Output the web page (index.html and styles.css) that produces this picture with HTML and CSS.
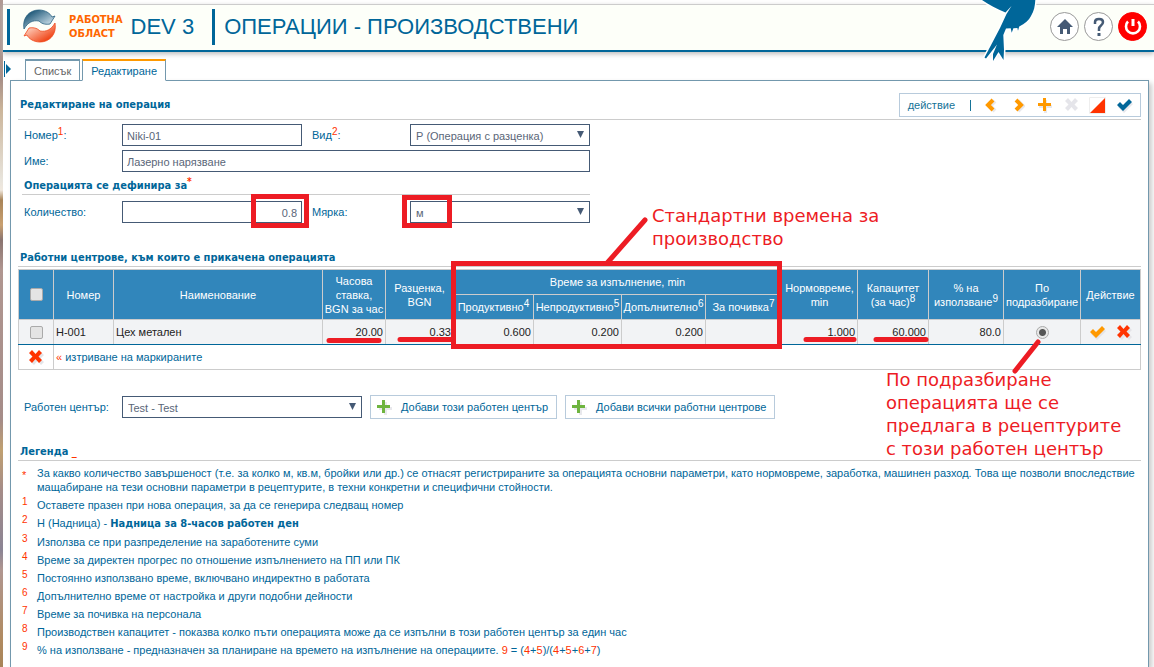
FILE: index.html
```html
<!DOCTYPE html>
<html lang="bg">
<head>
<meta charset="utf-8">
<meta name="viewport" content="width=device-width, initial-scale=1">
<title>Операции - Производствени</title>
<link rel="stylesheet" href="styles.css">
</head>
<body>
<svg class="defs" width="0" height="0" aria-hidden="true">
  <defs>
    <g id="plus-shape"><path d="M5 0h3v5h5v3H8v5H5V8H0V5h5z"/></g>
    <g id="cross-shape"><path d="M3 0l3.500 4L10 0l3 3-3.500 3.500L13 10l-3 3-3.500-4L3 13l-3-3 3.500-3.500L0 3z"/></g>
    <g id="check-shape"><path d="M0 6l3-3 3 3 6-6 3 3-9 9z"/></g>
  </defs>
</svg>

<header class="topbar">
  <div class="brand">
    <svg class="logo" width="36" height="36" viewBox="0 1 36 36" aria-hidden="true">
      <defs>
        <linearGradient id="lb" x1="0" x2="1" y1="0" y2="1"><stop offset="0.200" stop-color="#2a6180"/><stop offset="0.850" stop-color="#d3e5ef"/></linearGradient>
        <linearGradient id="lo" x1="0" x2="1" y1="0" y2="1"><stop offset="0.200" stop-color="#f0491c"/><stop offset="0.850" stop-color="#ffd8c8"/></linearGradient>
      </defs>
      <path d="M2 21C0 9 8 2 17 2c6 0 11 3 13 7l3-1-5 8c-6 1-9-1-11-3-6-1-11 1-15 8z" fill="url(#lb)" stroke="#2a6180" stroke-width="0.800"/>
      <path d="M2 21C0 9 8 2 17 2c6 0 11 3 13 7l3-1-5 8c-6 1-9-1-11-3-6-1-11 1-15 8z" transform="rotate(180 17.500 18)" fill="url(#lo)" stroke="#f0491c" stroke-width="0.800"/>
    </svg>
    <span class="brand-name">РАБОТНА<br>ОБЛАСТ</span>
    <span class="env">DEV 3</span>
  </div>
  <h1 class="page-title">ОПЕРАЦИИ - ПРОИЗВОДСТВЕНИ</h1>
  <nav class="top-actions">
    <a href="#home" class="round" aria-label="Начало"><svg width="18" height="18" viewBox="0 0 18 18"><path d="M9 1l8 8h-3v7h-3v-5H7v5H4V9H1z" fill="#455a75"/></svg></a>
    <a href="#help" class="round" aria-label="Помощ"><svg width="18" height="20" viewBox="0 0 18 20"><path d="M5 7V5q0-3 4-3t4 3q0 2-2 3.500T9 12v2" fill="none" stroke="#455a75" stroke-width="2.500"/><path d="M7.500 16h3v3h-3z" fill="#455a75"/></svg></a>
    <a href="#exit" class="round power" aria-label="Изход"><svg width="20" height="20" viewBox="0 0 20 20"><path d="M5 4.500a7 7 0 1 0 10 0" fill="none" stroke="#fff" stroke-width="2.600"/><path d="M8.500 2h3v7h-3z" fill="#fff"/></svg></a>
  </nav>
  <svg class="bird" width="60" height="64" viewBox="0 0 60 64" aria-hidden="true">
    <path d="M0 0C7 5 15 9 23.500 12.500L29.500 6 24.500 14 18 28 2.500 57.500 4 58.500 15 44.500 11 54v7l5.500-9 5 8 .5-10-.7-15 2.700-6.500 4.700-.3 1 4.500 1.700-4.500 4-.2.600 2.700 1.200-4.200C43 24 47 20 49 16c3-5 4-10 4.300-16z" fill="none" stroke="#fff" stroke-width="3"/>
    <path d="M0 0C7 5 15 9 23.500 12.500L29.500 6 24.500 14 18 28 2.500 57.500 4 58.500 15 44.500 11 54v7l5.500-9 5 8 .5-10-.7-15 2.700-6.500 4.700-.3 1 4.500 1.700-4.500 4-.2.600 2.700 1.200-4.200C43 24 47 20 49 16c3-5 4-10 4.300-16z" fill="#069"/>
  </svg>
</header>

<div class="workspace">
  <button class="expander" type="button" aria-label="Покажи менюто"></button>
  <nav class="tabs">
    <a class="tab" href="#list">Списък</a>
    <a class="tab active" href="#edit">Редактиране</a>
  </nav>

  <main class="panel">
    <div class="section-head with-tools">
      <h2>Редактиране на операция</h2>
      <div class="toolbar">
        <span class="tool-label">действие</span><span class="sep"></span>
        <button type="button" aria-label="Предишен"><svg width="17" height="17" viewBox="0 0 17 17"><path d="M12 3L7 8l5 5" transform="translate(2 1)" class="shade-line"/><path d="M12 3L7 8l5 5" class="orange-line"/></svg></button>
        <button type="button" aria-label="Следващ"><svg width="17" height="17" viewBox="0 0 17 17"><path d="M8 3l5 5-5 5" transform="translate(2 1)" class="shade-line"/><path d="M8 3l5 5-5 5" class="orange-line"/></svg></button>
        <button type="button" aria-label="Нов"><svg width="17" height="17" viewBox="0 0 17 17"><use href="#plus-shape" x="4" y="3" fill="#e8e8ec"/><use href="#plus-shape" x="3" y="1" fill="#f90"/></svg></button>
        <button type="button" aria-label="Изтрий" disabled><svg width="17" height="17" viewBox="0 0 17 17"><use href="#cross-shape" x="3" y="1" fill="#e5e5ea"/></svg></button>
        <button type="button" aria-label="Изчисти"><svg width="17" height="17" viewBox="0 0 17 17"><path d="M.5.5h16v16H.5z" fill="#fff" stroke="#eee"/><path d="M16 1v15H1z" fill="#f30"/></svg></button>
        <button type="button" aria-label="Запиши"><svg width="17" height="17" viewBox="0 0 17 17"><use href="#check-shape" x="2" y="4" fill="#e8e8ec"/><use href="#check-shape" x="1" y="2" fill="#069"/></svg></button>
      </div>
    </div>

    <form class="form">
      <label for="num">Номер<sup>1</sup>:</label>
      <input id="num" type="text" value="Niki-01">
      <label class="second" for="kind">Вид<sup>2</sup>:</label>
      <span class="select"><select id="kind"><option>Р (Операция с разценка)</option></select></span>
      <label for="name">Име:</label>
      <input id="name" class="wide" type="text" value="Лазерно нарязване">
      <h3>Операцията се дефинира за<sup>*</sup></h3>
      <label for="qty">Количество:</label>
      <input id="qty" class="number" type="text" value="0.8">
      <label class="second" for="unit">Мярка:</label>
      <span class="select"><select id="unit"><option>м</option></select></span>
    </form>

    <div class="section-head centers-head"><h2>Работни центрове, към които е прикачена операцията</h2></div>
    <table class="grid">
      <colgroup>
        <col class="c-check"><col class="c-num"><col><col class="c-rate"><col class="c-price"><col class="c-prod"><col class="c-nonprod"><col class="c-extra"><col class="c-rest"><col class="c-norm"><col class="c-cap"><col class="c-use"><col class="c-def"><col class="c-act">
      </colgroup>
      <thead>
        <tr>
          <th rowspan="2"><input type="checkbox" aria-label="Маркирай всички"></th>
          <th rowspan="2">Номер</th>
          <th rowspan="2">Наименование</th>
          <th rowspan="2">Часова<br>ставка,<br>BGN за час</th>
          <th rowspan="2">Разценка,<br>BGN</th>
          <th colspan="4">Време за изпълнение, min</th>
          <th rowspan="2">Нормовреме,<br>min</th>
          <th rowspan="2">Капацитет<br>(за час)<sup>8</sup></th>
          <th rowspan="2">% на<br>използване<sup>9</sup></th>
          <th rowspan="2">По<br>подразбиране</th>
          <th rowspan="2">Действие</th>
        </tr>
        <tr>
          <th>Продуктивно<sup>4</sup></th>
          <th>Непродуктивно<sup>5</sup></th>
          <th>Допълнително<sup>6</sup></th>
          <th>За почивка<sup>7</sup></th>
        </tr>
      </thead>
      <tbody>
        <tr>
          <td class="mid"><input type="checkbox" aria-label="Маркирай Н-001"></td>
          <td>Н-001</td>
          <td>Цех метален</td>
          <td class="n">20.00</td>
          <td class="n">0.33</td>
          <td class="n">0.600</td>
          <td class="n">0.200</td>
          <td class="n">0.200</td>
          <td class="n"></td>
          <td class="n">1.000</td>
          <td class="n">60.000</td>
          <td class="n">80.0</td>
          <td class="mid"><input type="radio" name="default" checked aria-label="По подразбиране"></td>
          <td class="mid">
            <div class="row-actions">
              <button type="button" aria-label="Редактирай"><svg width="17" height="17" viewBox="0 0 17 17"><use href="#check-shape" x="2" y="4" fill="#e4e4e8"/><use href="#check-shape" x="1" y="2" fill="#f90"/></svg></button>
              <button type="button" aria-label="Изтрий"><svg width="17" height="17" viewBox="0 0 17 17"><use href="#cross-shape" x="3" y="3" fill="#e4e4e8"/><use href="#cross-shape" x="1" y="1" fill="#f30"/></svg></button>
            </div>
          </td>
        </tr>
      </tbody>
      <tfoot>
        <tr>
          <td class="mid"><button type="button" aria-label="Изтрий маркираните"><svg width="17" height="17" viewBox="0 0 17 17"><use href="#cross-shape" x="3" y="3" fill="#e4e4e8"/><use href="#cross-shape" x="1" y="1" fill="#f30"/></svg></button></td>
          <td colspan="13"><span class="red">«</span> <a href="#delete">изтриване на маркираните</a></td>
        </tr>
      </tfoot>
    </table>

    <div class="add-row">
      <label for="center">Работен център:</label>
      <span class="select"><select id="center"><option>Test - Test</option></select></span>
      <button class="add" type="button"><svg width="17" height="17" viewBox="0 0 17 17" aria-hidden="true"><use href="#plus-shape" x="3" y="3" fill="#e8e8ec"/><use href="#plus-shape" x="1" y="1" fill="#6eb43f"/></svg>Добави този работен център</button>
      <button class="add" type="button"><svg width="17" height="17" viewBox="0 0 17 17" aria-hidden="true"><use href="#plus-shape" x="3" y="3" fill="#e8e8ec"/><use href="#plus-shape" x="1" y="1" fill="#6eb43f"/></svg>Добави всички работни центрове</button>
    </div>

    <div class="section-head"><h2>Легенда <a class="red" href="#legend">_</a></h2></div>
    <dl class="legend">
      <dt class="star">*</dt><dd>За какво количество завършеност (т.е. за колко м, кв.м, бройки или др.) се отнасят регистрираните за операцията основни параметри, като нормовреме, заработка, машинен разход. Това ще позволи впоследствие мащабиране на тези основни параметри в рецептурите, в техни конкретни и специфични стойности.</dd>
      <dt>1</dt><dd>Оставете празен при нова операция, за да се генерира следващ номер</dd>
      <dt>2</dt><dd>Н (Надница) - <b>Надница за 8-часов работен ден</b></dd>
      <dt>3</dt><dd>Използва се при разпределение на заработените суми</dd>
      <dt>4</dt><dd>Време за директен прогрес по отношение изпълнението на ПП или ПК</dd>
      <dt>5</dt><dd>Постоянно използвано време, включвано индиректно в работата</dd>
      <dt>6</dt><dd>Допълнително време от настройка и други подобни дейности</dd>
      <dt>7</dt><dd>Време за почивка на персонала</dd>
      <dt>8</dt><dd>Производствен капацитет - показва колко пъти операцията може да се изпълни в този работен център за един час</dd>
      <dt>9</dt><dd>% на използване - предназначен за планиране на времето на изпълнение на операциите. <span class="red">9</span> = (<span class="red">4</span>+<span class="red">5</span>)/(<span class="red">4</span>+<span class="red">5</span>+<span class="red">6</span>+<span class="red">7</span>)</dd>
    </dl>
  </main>
</div>

<div class="notes">
  <svg width="1154" height="667" viewBox="0 0 1154 667" fill="none" stroke="#ed1c24" stroke-width="5" aria-hidden="true">
    <path d="M253.500 196.500h53v29h-53zM404.500 197.500h45v28h-45zM453.500 263.500h326v83h-326z"/>
    <path d="M608 262L645 220M1015 371L1038 342M329 340.500h50M400 339.500h52M806 339.500h48M876 339.500h50" stroke-linecap="round"/>
  </svg>
  <p class="note note-times">Стандартни времена за<br>производство</p>
  <p class="note note-default">По подразбиране<br>операцията ще се<br>предлага в рецептурите<br>с този работен център</p>
</div>
</body>
</html>
```
FILE: styles.css
```css
* { box-sizing: border-box; }

body {
  margin: 0;
  padding: 4px 0 0 3px;
  min-height: 100vh;
  display: flex;
  flex-direction: column;
  position: relative;
  color: #069;
  font: 11px/14px "Liberation Sans", Arial, sans-serif;
  background: linear-gradient(#b09a94 0, #a89088 80px, #cbb59a 110px, #e8e4dc 180px, #f0e8de 190px, #a88458 200px, #c9a070 225px, #8a7470 240px, #b09690 270px, #a58c88 420px, #c0a070 450px, #a58c88 490px, #8b8494 550px, #b09690 570px, #b08a60 640px, #a88458 667px) left / 3px 100% no-repeat #fff;
}

h1, h2, h3, p, dl, dd { margin: 0; }
h2, h3, b, .brand-name { font-family: "DejaVu Sans Condensed", Tahoma, sans-serif; font-weight: bold; }
a { color: inherit; text-decoration: none; }
button { border: 0; padding: 0; background: none; color: inherit; font: inherit; cursor: pointer; }
svg { display: block; }
sup { font-size: 10px; line-height: 0; vertical-align: 4px; }
.defs { position: absolute; }
.red, label sup, h3 sup { color: #f30; }

/* top bar */
.topbar {
  position: relative;
  display: flex;
  align-items: center;
  height: 48px;
  padding: 0 7px 2px 4px;
  background: #fdfff9;
  border-top: 1px solid #ccc;
  border-bottom: 2px solid #069;
  box-shadow: 0 2px 5px #bbb;
}
.brand { display: flex; align-items: center; height: 36px; border-left: 3px solid #069; padding-left: 12px; }
.brand-name { margin-left: 11px; color: #f60; }
.env { margin-left: 8px; font-size: 22px; line-height: 26px; }
.page-title {
  margin-left: 18px;
  padding-left: 9px;
  border-left: 3px solid #069;
  font-family: "Liberation Sans", Arial, sans-serif;
  font-size: 22px;
  font-weight: normal;
  line-height: 36px;
}
.top-actions { display: flex; gap: 5px; margin-left: auto; }
.round {
  width: 29px;
  height: 29px;
  display: grid;
  place-items: center;
  border: 1px solid #999;
  border-radius: 50%;
  background: #fff;
}
.power { background: #f00; border-color: #f00; }
.bird { position: absolute; right: 112px; top: -5px; }

/* tabs */
.workspace { position: relative; flex: 1; display: flex; flex-direction: column; padding: 7px 5px 0 7px; }
.expander {
  position: absolute;
  left: 1px;
  top: 9px;
  width: 7px;
  height: 16px;
  border-left: 1px solid #069;
}
.expander::after { content: ""; display: block; margin-left: 1px; height: 10px; width: 5px; background: #069; clip-path: polygon(0 0, 100% 50%, 0 100%); }
.tabs { display: flex; gap: 2px; padding-left: 15px; margin-bottom: -1px; z-index: 1; }
.tab { height: 22px; padding: 3px 8px 0; border: 1px solid #7398ad; border-top-width: 2px; color: #666; background: #fff; }
.tab.active { color: #069; border-top-color: #f90; border-bottom-color: #fff; }

/* panel */
.panel { flex: 1; padding: 12px 7px 10px; border: 1px solid #7398ad; border-bottom: 0; background: #fff; box-shadow: 3px 3px 5px #ccc; }
.section-head { padding: 1px 2px; border-bottom: 1px solid #ccc; }
.section-head h2 { font-size: 11px; line-height: 14px; }
.with-tools { display: flex; align-items: center; justify-content: space-between; padding: 0 0 2px 2px; }
.toolbar { display: flex; align-items: center; gap: 10px; height: 24px; padding: 0 7px 0 8px; border: 1px solid #b8cbdc; color: #167397; }
.tool-label { margin-right: 5px; }
.sep { width: 1px; height: 11px; background: #167397; }
.orange-line, .shade-line { fill: none; stroke: #f90; stroke-width: 4; }
.shade-line { stroke: #e8e8ec; }

/* form */
.form { display: grid; grid-template-columns: 100px 180px 108px 180px; row-gap: 4px; align-items: center; padding: 4px 4px 0; }
.form label { padding-left: 2px; }
.form .second { padding-left: 10px; }
.form h3 { grid-column: 1 / -1; font-size: 11px; line-height: 14px; padding: 3px 2px 1px; margin-bottom: 2px; border-bottom: 1px solid #ccc; }
input[type="text"], select {
  width: 100%;
  height: 22px;
  border: 1px solid #455a75;
  border-radius: 0;
  background: #fff;
  color: #5a6678;
  font: inherit;
  padding: 2px 4px 0;
}
select { appearance: none; padding: 1px 18px 0 5px; display: block; }
.wide { grid-column: 2 / -1; }
.number { text-align: right; }
.select { position: relative; display: block; }
.select::after {
  content: "";
  position: absolute;
  right: 6px;
  top: 7px;
  width: 7px;
  height: 7px;
  background: #455a75;
  clip-path: polygon(0 0, 100% 0, 50% 100%);
  pointer-events: none;
}

/* work centres table */
.centers-head { margin: 27px 0 2px; }
.grid { width: 100%; table-layout: fixed; border-collapse: collapse; border: 1px solid #ccc; }
.c-check { width: 35px; } .c-num { width: 60px; } .c-rate { width: 63px; } .c-price { width: 68px; }
.c-prod { width: 80px; } .c-nonprod { width: 88px; } .c-extra { width: 84px; } .c-rest { width: 76px; }
.c-norm { width: 76px; } .c-cap { width: 71px; } .c-use { width: 75px; } .c-def { width: 77px; } .c-act { width: 60px; }
.grid th { height: 25px; padding: 0; border: 1px solid #ccc; background: #3186bb; color: #fff; font-weight: normal; white-space: nowrap; }
.grid td { height: 25px; padding: 0 2px; border: 1px solid #ccc; }
.grid tbody td { background: #f2f3f5; color: #222; border-bottom-color: #069; }
.grid .n { text-align: right; }
.grid .mid { text-align: center; padding: 0; }
.grid input { display: block; width: 13px; height: 13px; margin: 0 auto; appearance: none; background: #e4e4e4; border: 1px solid #aaa; border-radius: 2px; }
.grid input[type="radio"] { border-radius: 50%; background: radial-gradient(#555 0 3px, #e8e8e8 4px); }
.row-actions { display: flex; justify-content: center; gap: 10px; }
.grid tfoot button { display: block; margin: 0 auto; }

/* add row */
.add-row { display: flex; flex-wrap: wrap; align-items: center; gap: 8px; margin: 25px 0 25px; padding-left: 6px; }
.add-row label { width: 90px; white-space: nowrap; }
.add-row .select { width: 240px; }
.add { display: flex; align-items: center; gap: 8px; height: 24px; padding: 0 8px 0 5px; border: 1px solid #b8cbdc; }

/* legend */
.legend { display: grid; grid-template-columns: 15px 1fr; row-gap: 4px; padding: 5px 0 0 4px; }
.legend dt { color: #f30; font-size: 10px; line-height: 7px; }
.legend .star { font-size: 11px; line-height: 18px; }

/* annotations laid over the page */
.notes { position: absolute; left: 0; top: 0; pointer-events: none; }
.note { position: absolute; color: #ed1c24; font: 18px/23px "DejaVu Sans", Verdana, sans-serif; white-space: nowrap; }
.note-times { left: 652px; top: 204px; }
.note-default { left: 886px; top: 368px; }
```
